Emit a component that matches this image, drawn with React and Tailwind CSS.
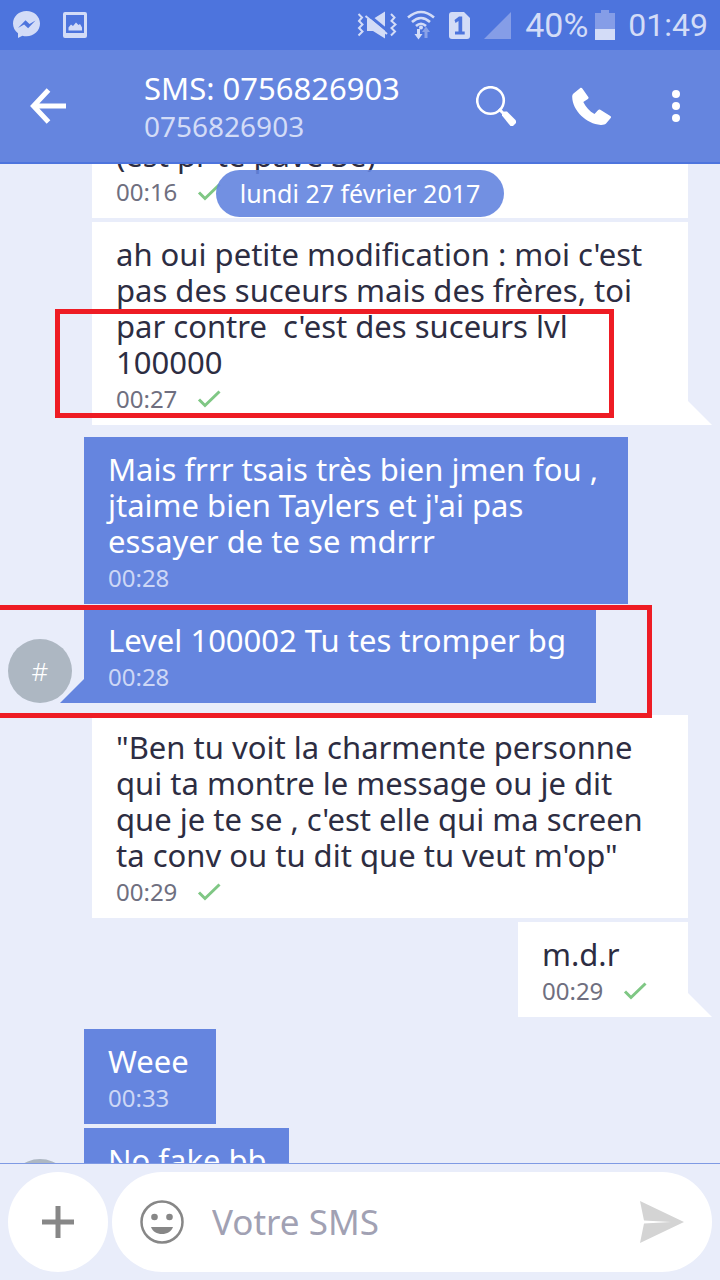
import { useLayoutEffect, useRef } from "react";

const MESSAGES = [
  { id: 1, from: "me", text: "(est pr te pavé 3e)", time: "00:16", width: "w-[596px]" },
  {
    id: 2,
    from: "me",
    text: "ah oui petite modification : moi c'est\npas des suceurs mais des frères, toi\npar contre  c'est des suceurs lvl\n100000",
    time: "00:27",
    width: "w-[596px]",
    tail: true,
    mark: "top-[87px] -left-[37px] h-[109px] w-[559px] border-5",
  },
  {
    id: 3,
    from: "them",
    text: "Mais frrr tsais très bien jmen fou ,\njtaime bien Taylers et j'ai pas\nessayer de te se mdrrr",
    time: "00:28",
    width: "w-[544px]",
  },
  {
    id: 4,
    from: "them",
    text: "Level 100002 Tu tes tromper bg",
    time: "00:28",
    width: "w-[512px]",
    tail: true,
    mark: "-top-[3px] -left-[84px] h-[113px] w-[652px] border-y-5 border-r-5",
  },
  {
    id: 5,
    from: "me",
    text: "\"Ben tu voit la charmente personne\nqui ta montre le message ou je dit\nque je te se , c'est elle qui ma screen\nta conv ou tu dit que tu veut m'op\"",
    time: "00:29",
    width: "w-[596px]",
  },
  { id: 6, from: "me", text: "m.d.r", time: "00:29", width: "w-[170px]", tail: true },
  { id: 7, from: "them", text: "Weee", time: "00:33", width: "w-[132px]" },
  { id: 8, from: "them", text: "No fake bb", time: "00:33", width: "w-[205px]", tail: true },
];

function StatusBar() {
  return (
    <div className="flex h-[50px] shrink-0 items-center justify-between bg-[#4d74dd] pr-3 pl-3 text-[#d3dcf7]">
      <div className="flex items-center gap-[22px]">
        <svg className="h-7 w-7" viewBox="0 0 28 28" fill="currentColor" aria-hidden="true">
          <path fillRule="evenodd" d="M14.5 0C7 0 1 5.400 1 12.500c0 4 1.800 7.200 5 9.800V27l4.400-2.300c1.300.4 2.700.6 4.100.6C22 25.300 28 19.800 28 12.600S22 0 14.500 0zM6 17l7.500-7.800 4 3.900L23.500 9.500l-7.400 7.800-4-3.900L6 17z" />
        </svg>
        <svg className="h-[26px] w-[26px]" viewBox="0 0 26 26" fill="currentColor" aria-hidden="true">
          <path fillRule="evenodd" d="M3 0h20a2 2 0 0 1 2 2v22a2 2 0 0 1-2 2H3a2 2 0 0 1-2-2V2a2 2 0 0 1 2-2zm1 3v18h18V3H4z" />
          <path d="M6.500 18.500v-3l2.500-3 2 1.500 3-3.500 2.500 2.500 1.500-1 2 3.500v3z" />
        </svg>
      </div>
      <div className="flex items-center">
        <svg className="h-7 w-10" viewBox="0 0 40 28" fill="none" stroke="currentColor" aria-hidden="true">
          <path d="M1.500 3l3.500 3.500-3 3.500 3.500 3.500-3.500 3.500 3.500 3.500-4 4M34 3l3.500 3.500-3 3.500 4 3.500-4 3.500 3.500 3.500-4 4" strokeWidth="2" />
          <path d="M10 8h6l12-7.500V27.500L16 20h-6z" fill="currentColor" stroke="none" />
          <path d="M9.500 2.500L32 21" stroke="#4d74dd" strokeWidth="3" />
          <path d="M8.500 5L30 23" strokeWidth="2" />
        </svg>
        <svg className="ml-[10px] h-[30px] w-7" viewBox="0 0 28 30" fill="none" aria-hidden="true">
          <g stroke="currentColor" strokeWidth="2.600">
            <path d="M1 7.500q13-11 26 0" />
            <path d="M5 12q9-8 18 0" />
            <path d="M9 16q5-4.500 10 0" />
          </g>
          <circle cx="14" cy="17.500" r="2" fill="currentColor" />
          <path d="M10 19h3v5h2.500l-4 5.500-4-5.500H10z" fill="currentColor" />
          <path d="M17.500 28v-6H15l4-5.500 4 5.500h-2.500v6z" fill="#8aa2e8" />
        </svg>
        <svg className="ml-[14px] h-[27px] w-[21px]" viewBox="0 0 21 27" aria-hidden="true">
          <path d="M3 0h12l6 6v18a3 3 0 0 1-3 3H3a3 3 0 0 1-3-3V3a3 3 0 0 1 3-3z" fill="currentColor" />
          <path d="M5.500 8l4.500-3.500h3.200V19.500h2.500v3H6v-3h3.500V9L6.500 11z" fill="#4d74dd" />
        </svg>
        <svg className="ml-[14px] h-[27px] w-[27px]" viewBox="0 0 27 27" aria-hidden="true">
          <path d="M27 0v27H0z" fill="#859de7" />
        </svg>
        <span className="ml-[14px] font-[Roboto,sans-serif] text-[34px] leading-10">40%</span>
        <svg className="ml-[7px] h-[30px] w-5" viewBox="0 0 20 30" aria-hidden="true">
          <path d="M0 3h6V0h8v3h6v16H0z" fill="#859de7" />
          <path d="M0 19h20v11H0z" fill="currentColor" />
        </svg>
        <span className="ml-[13px] font-[Roboto,sans-serif] text-[32px] leading-10">01:49</span>
      </div>
    </div>
  );
}

function Header() {
  return (
    <header className="flex h-[114px] shrink-0 items-center border-b-2 border-[#4d74dd] bg-[#6585df] pl-7 text-white">
      <button type="button" aria-label="Retour" className="flex h-12 w-10 items-center">
        <svg className="h-9 w-10" viewBox="0 0 40 36" fill="none" stroke="currentColor" strokeWidth="5" aria-hidden="true">
          <path d="M20.500 2L5.500 18l15 16M6 18h32" />
        </svg>
      </button>
      <div className="ml-[76px] min-w-0 flex-1">
        <h1 className="text-[31px] leading-10 whitespace-nowrap">SMS: 0756826903</h1>
        <p className="text-[28px] leading-9 text-[#d3dcf7]">0756826903</p>
      </div>
      <button type="button" aria-label="Rechercher" className="flex h-12 w-12 items-center justify-center">
        <svg className="h-10 w-10" viewBox="0 0 40 40" fill="none" stroke="currentColor" aria-hidden="true">
          <circle cx="14.500" cy="14.500" r="13.300" strokeWidth="2.600" />
          <path d="M23 23l5 5" strokeWidth="3" />
          <path d="M26 29.500v-2.500l2.500-1.500h2.500l9 9v2.500l-3 3h-2.500z" fill="currentColor" stroke="none" />
        </svg>
      </button>
      <button type="button" aria-label="Appeler" className="ml-12 flex h-12 w-12 items-center justify-center">
        <svg className="h-[38px] w-10" viewBox="0 0 40 38" fill="currentColor" aria-hidden="true">
          <path d="M1.500 6.500L8 1.200c.9-.7 1.700-.5 2.300.3l6 8.500c.5.8.3 1.400-.4 1.900l-4.600 3.100c2.300 5 6.200 9.200 11.200 12l3.700-4c.6-.7 1.300-.8 2.100-.3l10 6.300c.9.600 1 1.300.4 2.100L34.500 36c-1.300 1.500-3.200 2-5.800 1.900C14.500 37 .5 23.500.2 10c0-1.500.3-2.700 1.300-3.500z" />
        </svg>
      </button>
      <button type="button" aria-label="Plus d'options" className="mr-5 ml-9 flex h-12 w-12 items-center justify-center">
        <svg className="h-8 w-2" viewBox="0 0 8 32" fill="currentColor" overflow="visible" aria-hidden="true">
          <circle cx="4" cy="4" r="4" />
          <circle cx="4" cy="16" r="4" />
          <circle cx="4" cy="28" r="4" />
        </svg>
      </button>
    </header>
  );
}

function Message({ message, gap }) {
  const mine = message.from === "me";
  return (
    <li className={`flex items-end pr-8 pl-2 ${gap ? "mt-3" : "mt-1"} ${mine ? "justify-end" : ""}`}>
      {!mine && (
        <div className="mr-3 flex h-16 w-16 shrink-0 items-center justify-center">
          {message.tail && (
            <span className="flex h-16 w-16 items-center justify-center rounded-full bg-[#adb7c2] text-[26px] font-light text-white">
              #
            </span>
          )}
        </div>
      )}
      <div
        className={`relative max-w-full px-6 pt-[14px] pb-[9px] ${message.width} ${mine ? "bg-white" : "bg-[#6585df] text-white"}`}
      >
        <p
          className={`text-[31px] leading-9 whitespace-pre ${mine ? "text-[#2d2d42]" : "text-white"}`}
        >
          {message.text}
        </p>
        <div
          className={`flex h-9 items-center gap-5 pt-0.5 text-2xl leading-8 ${mine ? "text-[#6f6f80]" : "text-[#cdd7f6]"}`}
        >
          <time>{message.time}</time>
          {mine && (
            <svg className="h-[18px] w-6" viewBox="0 0 24 18" fill="none" stroke="#7fc784" strokeWidth="3" role="img" aria-label="Envoyé">
              <path d="M2 9.500l6 6L22.500 1.500" />
            </svg>
          )}
        </div>
        {message.tail && (
          <svg
            className={`absolute bottom-0 h-6 w-6 ${mine ? "left-full text-white" : "right-full text-[#6585df]"}`}
            viewBox="0 0 24 24"
            fill="currentColor"
            aria-hidden="true"
          >
            <path d={mine ? "M0 0l24 24H0z" : "M24 0v24H0z"} />
          </svg>
        )}
        {message.mark && (
          <span className={`pointer-events-none absolute z-10 border-[#ee1c24] ${message.mark}`} />
        )}
      </div>
    </li>
  );
}

function Composer() {
  return (
    <form className="flex shrink-0 gap-1 border-t border-[#7f9ae4] bg-[#e9edfa] p-2" onSubmit={(e) => e.preventDefault()}>
      <button
        type="button"
        aria-label="Joindre"
        className="flex h-[100px] w-[100px] shrink-0 items-center justify-center rounded-full bg-white text-[#878787]"
      >
        <svg className="h-8 w-8" viewBox="0 0 32 32" fill="currentColor" aria-hidden="true">
          <path d="M13.500 0h5v13.500H32v5H18.500V32h-5V18.500H0v-5h13.500z" />
        </svg>
      </button>
      <div className="flex h-[100px] min-w-0 flex-1 items-center rounded-full bg-white pr-7 pl-7">
        <button type="button" aria-label="Emoji" className="shrink-0 text-[#878787]">
          <svg className="h-11 w-11" viewBox="0 0 44 44" aria-hidden="true">
            <circle cx="22" cy="22" r="20.500" fill="none" stroke="currentColor" strokeWidth="2.500" />
            <circle cx="14.500" cy="17" r="3.300" fill="currentColor" />
            <circle cx="29.500" cy="17" r="3.300" fill="currentColor" />
            <path d="M11 27h22c-1.500 4.500-6 7-11 7s-9.500-2.500-11-7z" fill="currentColor" />
          </svg>
        </button>
        <input
          type="text"
          aria-label="Message"
          placeholder="Votre SMS"
          className="ml-7 min-w-0 flex-1 bg-transparent text-[35px] leading-[48px] text-[#2d2d42] outline-none placeholder:text-[#a1a1b3]"
        />
        <button type="submit" aria-label="Envoyer" className="shrink-0 text-[#d4d4d4]">
          <svg className="h-[42px] w-11" viewBox="0 0 44 42" fill="currentColor" aria-hidden="true">
            <path d="M0 0l44 21L0 42l4-19.500 27-1.500-27-1.500z" />
          </svg>
        </button>
      </div>
    </form>
  );
}

export default function App() {
  const list = useRef(null);

  useLayoutEffect(() => {
    list.current.scrollTop = 45;
  }, []);

  return (
    <div className="flex h-screen flex-col bg-[#e9edfa] font-['Noto_Sans',sans-serif]">
      <StatusBar />
      <Header />
      <main className="relative flex min-h-0 flex-1 flex-col">
        <ul ref={list} className="min-h-0 flex-1 overflow-x-hidden overflow-y-auto [scrollbar-width:none]">
          {MESSAGES.map((message, i) => (
            <Message key={message.id} message={message} gap={i > 0 && MESSAGES[i - 1].from !== message.from} />
          ))}
        </ul>
        <div className="pointer-events-none absolute inset-x-0 top-[6px] flex justify-center">
          <span className="rounded-full bg-[#6384df]/90 px-6 text-[25px] leading-[47px] text-white">
            lundi 27 février 2017
          </span>
        </div>
      </main>
      <Composer />
    </div>
  );
}
